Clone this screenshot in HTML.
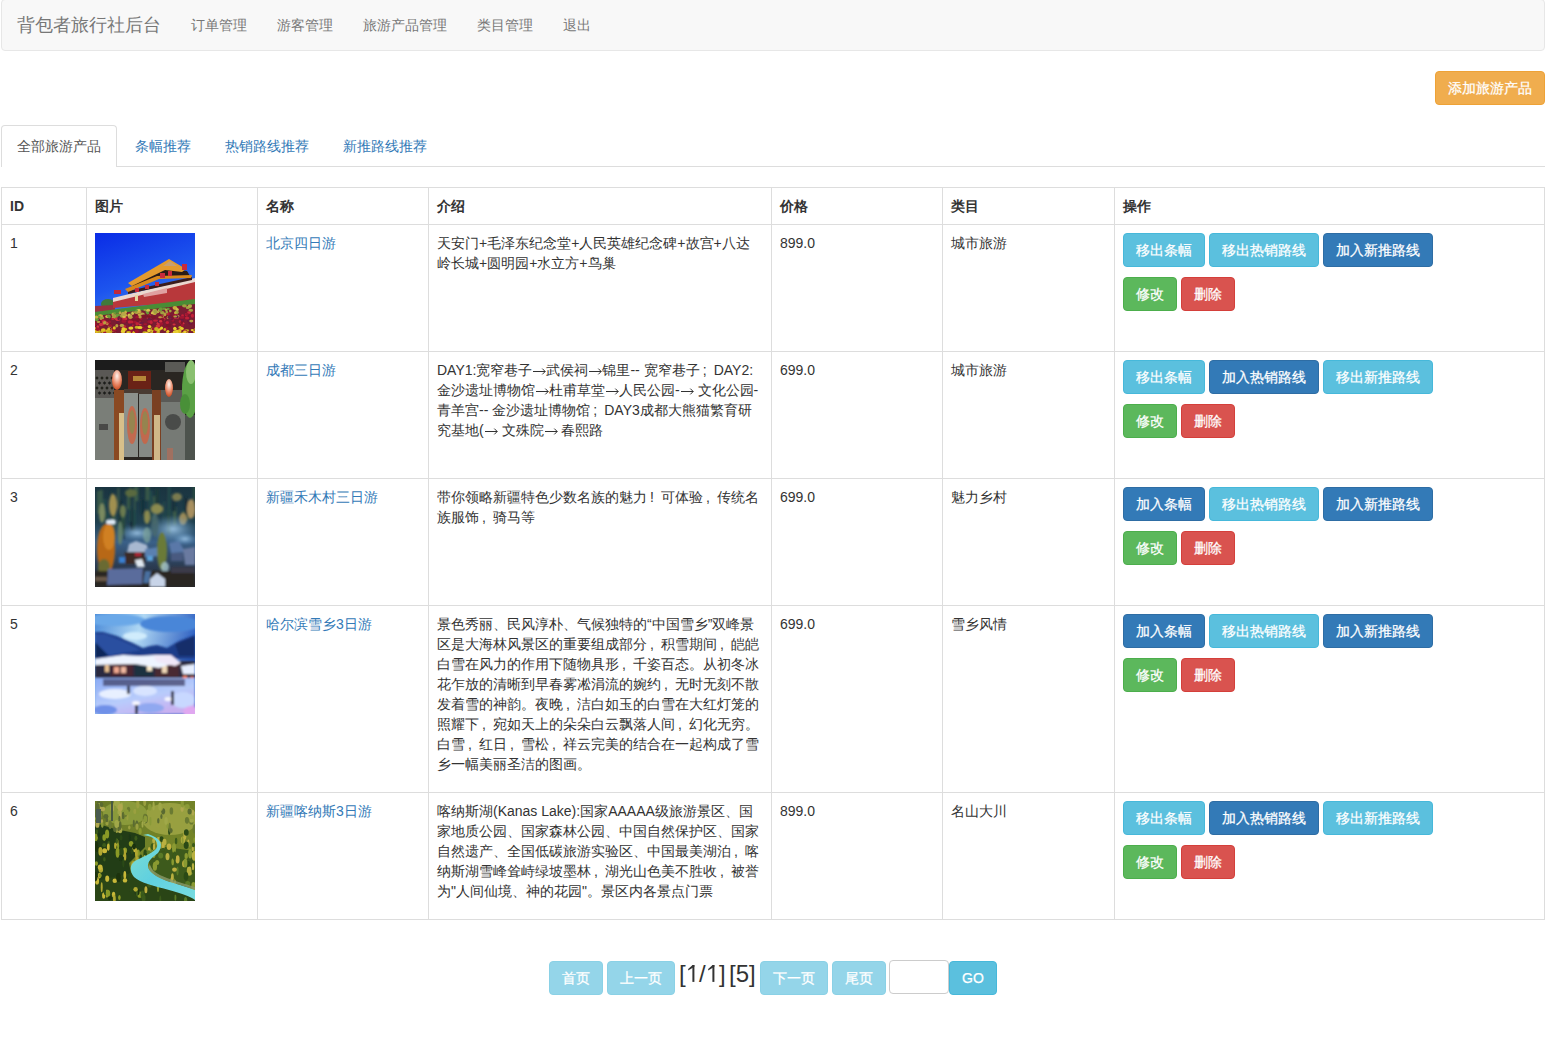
<!DOCTYPE html>
<html><head><meta charset="utf-8">
<style>
*{box-sizing:border-box;margin:0;padding:0}
html,body{width:1555px;height:1042px;overflow:hidden;background:#fff}
body{font-family:"Liberation Sans",sans-serif;font-size:14px;line-height:20px;color:#333;position:relative}
.abs{position:absolute}
.navbar{position:absolute;left:1px;top:-1px;width:1544px;height:52px;background:#f8f8f8;border:1px solid #e7e7e7;border-radius:4px;white-space:nowrap}
.brand{position:absolute;top:15px;left:15px;font-size:18px;line-height:20px;color:#777}
.nav a{position:absolute;top:15px;color:#777;text-decoration:none}
.btn{position:absolute;height:34px;border:1px solid;border-radius:4px;color:#fff;text-align:center;line-height:20px;padding:6px 0;white-space:nowrap;font-size:14px;-webkit-text-stroke:0.25px #fff}
.warn{background:#f0ad4e;border-color:#eea236}
.info{background:#5bc0de;border-color:#46b8da}
.prim{background:#337ab7;border-color:#2e6da4}
.succ{background:#5cb85c;border-color:#4cae4c}
.dang{background:#d9534f;border-color:#d43f3a}
.dis{background:#94d5e9;border-color:#8ad1e6}
.tabline{position:absolute;left:1px;top:166px;width:1544px;height:1px;background:#ddd}
.tab{position:absolute;top:125px;height:42px;border:1px solid #ddd;border-bottom:0;border-radius:4px 4px 0 0;background:#fff}
.tabt{position:absolute;top:136px;white-space:nowrap}
.link{color:#337ab7}
.hl{position:absolute;height:1px;background:#ddd}
.vl{position:absolute;width:1px;background:#ddd}
.c{position:absolute;white-space:nowrap}
.th{font-weight:bold}
.img{position:absolute;width:100px;height:100px;overflow:hidden}
.img svg{display:block}
.ar{display:inline-block;width:14px;height:20px;vertical-align:top}
.ar svg{display:block}
.sc{display:inline-block;width:14px;font-style:normal;padding-left:3px}
i{font-style:normal}
.one{display:inline-block;width:13.35px;height:34px;vertical-align:top}
.one svg{display:block}
</style></head><body>
<div class="navbar">
  <span class="brand">背包者旅行社后台</span>
  <div class="nav">
    <a style="left:189px">订单管理</a>
    <a style="left:275px">游客管理</a>
    <a style="left:361px">旅游产品管理</a>
    <a style="left:475px">类目管理</a>
    <a style="left:561px">退出</a>
  </div>
</div>

<div class="btn warn" style="left:1435px;top:71px;width:110px">添加旅游产品</div>

<div class="tabline"></div>
<div class="tab" style="left:1px;width:116px"></div>
<span class="tabt" style="left:17px;color:#555">全部旅游产品</span>
<span class="tabt link" style="left:135px">条幅推荐</span>
<span class="tabt link" style="left:225px">热销路线推荐</span>
<span class="tabt link" style="left:343px">新推路线推荐</span>

<!-- table grid -->
<div class="hl" style="left:1px;top:187px;width:1544px"></div>
<div class="hl" style="left:1px;top:224px;width:1544px"></div>
<div class="hl" style="left:1px;top:351px;width:1544px"></div>
<div class="hl" style="left:1px;top:478px;width:1544px"></div>
<div class="hl" style="left:1px;top:605px;width:1544px"></div>
<div class="hl" style="left:1px;top:792px;width:1544px"></div>
<div class="hl" style="left:1px;top:919px;width:1544px"></div>
<div class="vl" style="left:1px;top:187px;height:733px"></div>
<div class="vl" style="left:86px;top:187px;height:733px"></div>
<div class="vl" style="left:257px;top:187px;height:733px"></div>
<div class="vl" style="left:428px;top:187px;height:733px"></div>
<div class="vl" style="left:771px;top:187px;height:733px"></div>
<div class="vl" style="left:942px;top:187px;height:733px"></div>
<div class="vl" style="left:1114px;top:187px;height:733px"></div>
<div class="vl" style="left:1544px;top:187px;height:733px"></div>

<!-- header -->
<span class="c th" style="left:10px;top:196px">ID</span>
<span class="c th" style="left:95px;top:196px">图片</span>
<span class="c th" style="left:266px;top:196px">名称</span>
<span class="c th" style="left:437px;top:196px">介绍</span>
<span class="c th" style="left:780px;top:196px">价格</span>
<span class="c th" style="left:951px;top:196px">类目</span>
<span class="c th" style="left:1123px;top:196px">操作</span>

<!-- row 1 -->
<span class="c" style="left:10px;top:233px">1</span>
<div class="img" style="left:95px;top:233px"><svg width="100" height="100" viewBox="0 0 100 100"><defs><linearGradient id="g1s" x1="0" y1="0" x2="0.35" y2="1"><stop offset="0" stop-color="#0a2ce6"/><stop offset="0.55" stop-color="#1d55ee"/><stop offset="1" stop-color="#4a90e8"/></linearGradient><filter id="b1" x="-10%" y="-10%" width="120%" height="120%"><feGaussianBlur stdDeviation="0.5"/></filter></defs>
<rect width="100" height="100" fill="url(#g1s)"/>
<g filter="url(#b1)">
<ellipse cx="13" cy="71" rx="7" ry="5" fill="#3f7a3a"/>
<polygon points="0,73 20,72 20,78 0,79" fill="#9a3040"/>
<polygon points="18,66 100,46 100,68 18,75" fill="#b8383a"/>
<polygon points="18,65 100,45 100,49 18,69" fill="#ead8d0"/>
<polygon points="33,58 97,44 97,47 33,61" fill="#3a1e1c"/>
<polygon points="38,51 72,35 92,38 95,43 64,44 36,55" fill="#2a1a18"/>
<polygon points="30,56 62,43 97,42 96,45 64,46 33,59" fill="#d8881e"/>
<polygon points="33,50 74,26 91,36 87,39 70,37 37,53" fill="#e39a2e"/>
<polygon points="68,33 75,28 82,33" fill="#c8a070"/>
<rect x="87" y="31" width="5" height="6" fill="#c82a3a"/>
<rect x="65" y="40" width="5" height="5" fill="#c82a3a"/>
<rect x="73" y="38" width="4" height="5" fill="#c82a3a"/>
<rect x="50" y="52" width="4" height="4" fill="#c82a3a"/>
<rect x="60" y="49" width="4" height="4" fill="#c82a3a"/>
<rect x="40" y="55" width="4" height="4" fill="#c82a3a"/>
<rect x="19" y="57" width="7" height="4" fill="#c02a3a"/>
<polygon points="48,61 72,55 72,60 49,64" fill="#e0a0a0"/>
<rect x="40" y="62" width="3" height="6" fill="#e8d8a0"/>
<polygon points="0,79 60,71 100,66 100,74 0,84" fill="#4a8c34"/>
<polygon points="0,83 100,71 100,100 0,100" fill="#7a1a30"/>
<ellipse cx="45.0" cy="90.5" rx="1.8" ry="1.9" fill="#d03040"/>
<ellipse cx="17.7" cy="96.9" rx="2.1" ry="1.8" fill="#c8b020"/>
<ellipse cx="7.8" cy="87.2" rx="2.0" ry="1.9" fill="#a01830"/>
<ellipse cx="64.0" cy="90.5" rx="2.6" ry="1.7" fill="#d03040"/>
<ellipse cx="62.0" cy="79.2" rx="2.4" ry="1.1" fill="#b8a848"/>
<ellipse cx="1.7" cy="98.7" rx="2.3" ry="1.3" fill="#e0c020"/>
<ellipse cx="59.5" cy="80.4" rx="2.1" ry="1.5" fill="#c8b040"/>
<ellipse cx="66.9" cy="86.7" rx="1.8" ry="1.6" fill="#801828"/>
<ellipse cx="94.9" cy="74.0" rx="1.6" ry="1.2" fill="#6a9a38"/>
<ellipse cx="28.1" cy="80.5" rx="1.8" ry="1.8" fill="#b8a848"/>
<ellipse cx="38.2" cy="100.0" rx="1.5" ry="1.9" fill="#e0c020"/>
<ellipse cx="3.4" cy="88.9" rx="1.8" ry="1.1" fill="#b8a040"/>
<ellipse cx="63.5" cy="95.2" rx="1.7" ry="1.3" fill="#a01830"/>
<ellipse cx="-0.4" cy="89.8" rx="1.4" ry="1.7" fill="#a01830"/>
<ellipse cx="-0.9" cy="90.9" rx="1.4" ry="1.6" fill="#d03040"/>
<ellipse cx="44.5" cy="81.7" rx="1.8" ry="1.4" fill="#c8b040"/>
<ellipse cx="39.1" cy="100.8" rx="1.6" ry="2.0" fill="#e0c020"/>
<ellipse cx="81.6" cy="81.5" rx="1.5" ry="1.4" fill="#a01830"/>
<ellipse cx="86.9" cy="90.8" rx="1.3" ry="1.1" fill="#a01830"/>
<ellipse cx="43.9" cy="77.4" rx="1.7" ry="1.3" fill="#d8c050"/>
<ellipse cx="5.6" cy="83.1" rx="2.1" ry="1.0" fill="#d8c050"/>
<ellipse cx="36.3" cy="92.3" rx="2.5" ry="1.5" fill="#c02038"/>
<ellipse cx="57.8" cy="97.6" rx="2.1" ry="1.3" fill="#e8d030"/>
<ellipse cx="21.8" cy="92.7" rx="1.5" ry="1.7" fill="#b8a040"/>
<ellipse cx="95.8" cy="77.3" rx="2.4" ry="1.6" fill="#a0a040"/>
<ellipse cx="41.8" cy="79.8" rx="1.9" ry="1.3" fill="#b8a848"/>
<ellipse cx="74.9" cy="84.4" rx="2.4" ry="1.6" fill="#d03040"/>
<ellipse cx="28.5" cy="82.7" rx="1.4" ry="1.5" fill="#b8a848"/>
<ellipse cx="66.0" cy="90.9" rx="1.6" ry="1.9" fill="#a01830"/>
<ellipse cx="19.2" cy="80.2" rx="1.8" ry="1.2" fill="#6a9a38"/>
<ellipse cx="2.8" cy="87.1" rx="2.0" ry="1.1" fill="#6a1a40"/>
<ellipse cx="35.7" cy="98.5" rx="2.1" ry="1.7" fill="#a01830"/>
<ellipse cx="58.8" cy="79.1" rx="2.5" ry="1.5" fill="#b8a848"/>
<ellipse cx="35.2" cy="85.3" rx="1.2" ry="1.6" fill="#a01830"/>
<ellipse cx="48.2" cy="94.5" rx="1.4" ry="1.1" fill="#a01830"/>
<ellipse cx="45.1" cy="85.8" rx="2.5" ry="1.7" fill="#a01830"/>
<ellipse cx="71.2" cy="95.5" rx="1.7" ry="1.7" fill="#a01830"/>
<ellipse cx="91.7" cy="97.3" rx="2.5" ry="1.0" fill="#c8b020"/>
<ellipse cx="50.0" cy="76.9" rx="1.7" ry="1.0" fill="#a0a040"/>
<ellipse cx="5.5" cy="83.2" rx="2.6" ry="1.9" fill="#b8a848"/>
<ellipse cx="73.7" cy="84.4" rx="2.2" ry="1.5" fill="#b8a040"/>
<ellipse cx="46.1" cy="90.0" rx="2.3" ry="1.0" fill="#6a1a40"/>
<ellipse cx="60.5" cy="87.7" rx="2.5" ry="1.1" fill="#c02038"/>
<ellipse cx="79.1" cy="91.6" rx="1.6" ry="1.0" fill="#d03040"/>
<ellipse cx="29.3" cy="93.8" rx="1.9" ry="1.8" fill="#c02038"/>
<ellipse cx="33.6" cy="99.4" rx="2.4" ry="1.3" fill="#c8b020"/>
<ellipse cx="67.3" cy="79.8" rx="2.3" ry="1.8" fill="#a0a040"/>
<ellipse cx="18.8" cy="84.4" rx="2.0" ry="1.3" fill="#c8b040"/>
<ellipse cx="12.2" cy="90.8" rx="2.2" ry="2.0" fill="#a01830"/>
<ellipse cx="26.8" cy="82.8" rx="1.9" ry="1.9" fill="#a0a040"/>
<ellipse cx="84.4" cy="83.5" rx="1.9" ry="1.3" fill="#6a1a40"/>
<ellipse cx="85.3" cy="100.5" rx="1.6" ry="1.8" fill="#c8b020"/>
<ellipse cx="26.9" cy="92.4" rx="2.2" ry="1.6" fill="#b8a040"/>
<ellipse cx="30.1" cy="96.3" rx="2.1" ry="1.4" fill="#e0c020"/>
<ellipse cx="17.8" cy="96.2" rx="1.5" ry="1.1" fill="#a01830"/>
<ellipse cx="2.9" cy="93.8" rx="1.4" ry="1.5" fill="#d03040"/>
<ellipse cx="64.6" cy="84.5" rx="2.2" ry="1.2" fill="#a01830"/>
<ellipse cx="47.4" cy="81.1" rx="2.3" ry="1.5" fill="#b8a848"/>
<ellipse cx="1.8" cy="86.2" rx="2.0" ry="1.9" fill="#6a9a38"/>
<ellipse cx="50.0" cy="100.9" rx="1.8" ry="1.8" fill="#e8d030"/>
<ellipse cx="92.2" cy="74.4" rx="1.4" ry="1.5" fill="#a0a040"/>
<ellipse cx="63.1" cy="98.7" rx="2.0" ry="1.7" fill="#c8b020"/>
<ellipse cx="50.3" cy="96.6" rx="1.8" ry="1.7" fill="#a01830"/>
<ellipse cx="19.3" cy="95.1" rx="1.5" ry="1.9" fill="#e0c020"/>
<ellipse cx="100.0" cy="100.3" rx="1.6" ry="1.7" fill="#a01830"/>
<ellipse cx="-0.4" cy="91.6" rx="1.8" ry="1.6" fill="#a01830"/>
<ellipse cx="77.9" cy="86.9" rx="1.5" ry="1.9" fill="#a01830"/>
<ellipse cx="42.6" cy="78.1" rx="1.7" ry="1.8" fill="#d8c050"/>
<ellipse cx="12.6" cy="83.6" rx="2.5" ry="1.5" fill="#d8c050"/>
<ellipse cx="68.5" cy="86.1" rx="2.0" ry="1.7" fill="#d03040"/>
<ellipse cx="76.8" cy="85.6" rx="1.6" ry="1.7" fill="#6a1a40"/>
<ellipse cx="64.4" cy="88.6" rx="1.6" ry="1.7" fill="#6a1a40"/>
<ellipse cx="97.3" cy="97.1" rx="1.6" ry="1.1" fill="#e8d030"/>
<ellipse cx="54.7" cy="82.8" rx="1.5" ry="1.5" fill="#d03040"/>
<ellipse cx="50.3" cy="91.3" rx="2.0" ry="1.0" fill="#a01830"/>
<ellipse cx="93.4" cy="87.7" rx="1.4" ry="1.1" fill="#6a1a40"/>
<ellipse cx="15.3" cy="99.6" rx="1.8" ry="2.0" fill="#c8b020"/>
<ellipse cx="94.0" cy="79.6" rx="1.9" ry="1.3" fill="#d03040"/>
<ellipse cx="91.7" cy="99.1" rx="1.9" ry="1.1" fill="#c8b020"/>
<ellipse cx="41.6" cy="78.1" rx="1.4" ry="1.8" fill="#6a9a38"/>
<ellipse cx="0.4" cy="85.7" rx="1.2" ry="1.3" fill="#c8b040"/>
<ellipse cx="73.3" cy="80.6" rx="1.3" ry="1.7" fill="#a0a040"/>
<ellipse cx="10.8" cy="91.1" rx="2.2" ry="1.7" fill="#801828"/>
<ellipse cx="89.4" cy="72.8" rx="2.4" ry="1.6" fill="#a0a040"/>
<ellipse cx="54.0" cy="97.6" rx="1.9" ry="1.9" fill="#e8d030"/>
<ellipse cx="61.6" cy="97.3" rx="2.5" ry="1.6" fill="#e8d030"/>
<ellipse cx="34.1" cy="82.4" rx="1.6" ry="1.9" fill="#d8c050"/>
<ellipse cx="20.7" cy="101.0" rx="1.4" ry="1.2" fill="#e0c020"/>
<ellipse cx="73.6" cy="80.9" rx="1.8" ry="1.9" fill="#a01830"/>
<ellipse cx="54.5" cy="93.6" rx="1.8" ry="1.7" fill="#e8d030"/>
<ellipse cx="-0.2" cy="85.8" rx="2.5" ry="2.0" fill="#6a9a38"/>
<ellipse cx="10.0" cy="91.1" rx="1.9" ry="1.7" fill="#801828"/>
<ellipse cx="17.7" cy="81.5" rx="1.2" ry="1.8" fill="#b8a848"/>
<ellipse cx="61.8" cy="98.6" rx="1.4" ry="1.2" fill="#c8b020"/>
<ellipse cx="19.2" cy="97.6" rx="2.5" ry="1.1" fill="#a01830"/>
<ellipse cx="4.4" cy="100.1" rx="1.3" ry="1.1" fill="#c8b020"/>
<ellipse cx="38.7" cy="87.7" rx="1.8" ry="1.6" fill="#801828"/>
<ellipse cx="-0.6" cy="95.3" rx="1.5" ry="1.5" fill="#e8d030"/>
<ellipse cx="74.9" cy="84.8" rx="2.0" ry="1.1" fill="#c02038"/>
<ellipse cx="80.4" cy="82.2" rx="2.3" ry="1.7" fill="#a01830"/>
<ellipse cx="87.5" cy="90.4" rx="2.0" ry="1.2" fill="#d03040"/>
<ellipse cx="58.8" cy="84.2" rx="1.6" ry="1.1" fill="#801828"/>
<ellipse cx="75.3" cy="78.1" rx="1.4" ry="1.3" fill="#a0a040"/>
<ellipse cx="54.0" cy="85.3" rx="2.3" ry="1.4" fill="#d03040"/>
<ellipse cx="73.2" cy="75.9" rx="1.6" ry="1.1" fill="#6a9a38"/>
<ellipse cx="90.4" cy="100.7" rx="1.5" ry="1.9" fill="#e0c020"/>
<ellipse cx="67.3" cy="83.5" rx="1.8" ry="1.2" fill="#b8a040"/>
<ellipse cx="6.0" cy="91.5" rx="2.1" ry="1.7" fill="#d03040"/>
<ellipse cx="77.2" cy="100.5" rx="1.4" ry="1.1" fill="#e0c020"/>
<ellipse cx="22.7" cy="89.0" rx="1.3" ry="1.2" fill="#6a1a40"/>
<ellipse cx="37.1" cy="80.2" rx="1.6" ry="1.3" fill="#6a9a38"/>
<ellipse cx="54.2" cy="86.4" rx="2.0" ry="2.0" fill="#6a1a40"/>
<ellipse cx="64.4" cy="96.0" rx="2.0" ry="1.7" fill="#e0c020"/>
<ellipse cx="97.4" cy="82.8" rx="1.7" ry="2.0" fill="#c02038"/>
<ellipse cx="87.0" cy="87.9" rx="1.3" ry="1.9" fill="#6a1a40"/>
<ellipse cx="41.8" cy="89.8" rx="1.6" ry="1.5" fill="#6a1a40"/>
<ellipse cx="48.3" cy="83.2" rx="2.1" ry="1.7" fill="#801828"/>
<ellipse cx="0.8" cy="96.7" rx="2.1" ry="1.4" fill="#e0c020"/>
<ellipse cx="69.2" cy="75.8" rx="2.2" ry="1.1" fill="#6a9a38"/>
<ellipse cx="100.8" cy="99.3" rx="2.3" ry="1.2" fill="#e0c020"/>
<ellipse cx="72.8" cy="80.8" rx="1.3" ry="1.1" fill="#c02038"/>
<ellipse cx="82.3" cy="98.5" rx="2.6" ry="1.8" fill="#e8d030"/>
<ellipse cx="60.8" cy="78.3" rx="1.8" ry="1.1" fill="#d8c050"/>
<ellipse cx="87.6" cy="82.6" rx="1.4" ry="1.4" fill="#c02038"/>
<ellipse cx="67.5" cy="86.6" rx="2.1" ry="1.7" fill="#801828"/>
<ellipse cx="35.9" cy="95.1" rx="2.5" ry="1.7" fill="#e8d030"/>
<ellipse cx="22.8" cy="81.9" rx="2.3" ry="1.6" fill="#6a9a38"/>
<ellipse cx="35.4" cy="84.3" rx="2.2" ry="1.7" fill="#b8a040"/>
<ellipse cx="17.8" cy="85.9" rx="1.5" ry="1.2" fill="#c02038"/>
<ellipse cx="99.9" cy="98.5" rx="2.1" ry="1.0" fill="#e0c020"/>
<ellipse cx="25.0" cy="79.8" rx="1.3" ry="1.5" fill="#b8a848"/>
<ellipse cx="5.5" cy="83.1" rx="2.0" ry="1.6" fill="#c8b040"/>
<ellipse cx="36.8" cy="89.0" rx="1.7" ry="1.5" fill="#c02038"/>
<ellipse cx="11.9" cy="98.4" rx="1.8" ry="1.8" fill="#e0c020"/>
<ellipse cx="85.2" cy="94.4" rx="1.8" ry="1.3" fill="#c8b020"/>
<ellipse cx="82.2" cy="83.3" rx="2.4" ry="1.6" fill="#b8a040"/>
<ellipse cx="28.3" cy="95.7" rx="1.8" ry="1.4" fill="#e8d030"/>
<ellipse cx="8.1" cy="98.5" rx="2.0" ry="1.4" fill="#e0c020"/>
<ellipse cx="57.1" cy="96.3" rx="1.6" ry="1.8" fill="#c8b020"/>
<ellipse cx="5.9" cy="85.5" rx="1.3" ry="1.3" fill="#d8c050"/>
<ellipse cx="73.4" cy="92.7" rx="2.4" ry="1.2" fill="#801828"/>
<ellipse cx="66.4" cy="83.3" rx="1.7" ry="1.4" fill="#a01830"/>
<ellipse cx="59.9" cy="98.5" rx="1.8" ry="1.8" fill="#a01830"/>
<ellipse cx="29.7" cy="85.8" rx="2.6" ry="1.7" fill="#d03040"/>
<ellipse cx="51.7" cy="78.4" rx="1.2" ry="1.7" fill="#6a9a38"/>
<ellipse cx="58.8" cy="95.8" rx="2.3" ry="1.5" fill="#a01830"/>
<ellipse cx="85.0" cy="88.6" rx="1.3" ry="1.5" fill="#c02038"/>
<ellipse cx="86.9" cy="95.6" rx="1.9" ry="1.5" fill="#e8d030"/>
<ellipse cx="57.0" cy="100.2" rx="1.3" ry="1.5" fill="#c8b020"/>
<ellipse cx="80.0" cy="75.5" rx="1.6" ry="1.1" fill="#b8a848"/>
<ellipse cx="30.6" cy="79.2" rx="1.3" ry="1.8" fill="#c8b040"/>
<ellipse cx="41.9" cy="94.2" rx="2.3" ry="1.5" fill="#c8b020"/>
<ellipse cx="77.5" cy="84.3" rx="2.3" ry="1.3" fill="#801828"/>
<ellipse cx="12.2" cy="90.6" rx="1.3" ry="1.6" fill="#b8a040"/>
<ellipse cx="2.8" cy="96.3" rx="2.4" ry="1.8" fill="#a01830"/>
<ellipse cx="84.7" cy="97.8" rx="1.9" ry="1.7" fill="#e0c020"/>
<ellipse cx="81.4" cy="84.8" rx="2.5" ry="1.2" fill="#d03040"/>
<ellipse cx="14.9" cy="93.5" rx="1.4" ry="1.2" fill="#b8a040"/>
<ellipse cx="42.2" cy="84.3" rx="1.9" ry="1.7" fill="#a01830"/>
<ellipse cx="29.6" cy="82.2" rx="2.5" ry="1.8" fill="#c8b040"/>
<ellipse cx="-0.2" cy="91.2" rx="1.6" ry="1.2" fill="#a01830"/>
<ellipse cx="35.4" cy="91.6" rx="2.2" ry="1.6" fill="#6a1a40"/>
<ellipse cx="21.3" cy="83.6" rx="1.8" ry="1.9" fill="#6a9a38"/>
<ellipse cx="95.5" cy="90.0" rx="1.9" ry="1.3" fill="#6a1a40"/>
<ellipse cx="90.3" cy="98.5" rx="2.1" ry="1.8" fill="#a01830"/>
<ellipse cx="7.6" cy="98.3" rx="1.3" ry="1.9" fill="#c8b020"/>
<ellipse cx="81.3" cy="83.8" rx="2.3" ry="1.8" fill="#6a1a40"/>
<ellipse cx="79.9" cy="74.8" rx="2.4" ry="1.9" fill="#c8b040"/>
<ellipse cx="92.1" cy="85.0" rx="2.2" ry="1.6" fill="#c02038"/>
<ellipse cx="14.4" cy="83.6" rx="1.4" ry="1.9" fill="#6a9a38"/>
<ellipse cx="82.2" cy="76.6" rx="1.6" ry="1.5" fill="#d8c050"/>
<ellipse cx="13.7" cy="96.3" rx="1.5" ry="1.9" fill="#e0c020"/>
<ellipse cx="13.5" cy="83.1" rx="1.6" ry="1.7" fill="#6a9a38"/>
<ellipse cx="8.1" cy="90.7" rx="1.3" ry="1.7" fill="#d03040"/>
<ellipse cx="54.5" cy="88.7" rx="2.3" ry="1.4" fill="#a01830"/>
<ellipse cx="93.3" cy="74.4" rx="1.5" ry="1.5" fill="#a0a040"/>
<ellipse cx="52.7" cy="80.1" rx="1.6" ry="1.4" fill="#6a9a38"/>
<ellipse cx="55.9" cy="100.9" rx="1.7" ry="1.7" fill="#e0c020"/>
<ellipse cx="9.0" cy="88.9" rx="2.2" ry="1.8" fill="#d03040"/>
<ellipse cx="10.7" cy="89.8" rx="2.2" ry="1.5" fill="#d03040"/>
<ellipse cx="28.5" cy="81.4" rx="2.4" ry="1.8" fill="#b8a848"/>
<ellipse cx="72.8" cy="98.3" rx="1.6" ry="1.4" fill="#e8d030"/>
<ellipse cx="54.1" cy="83.5" rx="2.3" ry="1.6" fill="#801828"/>
<ellipse cx="7.0" cy="85.0" rx="2.2" ry="1.3" fill="#a0a040"/>
<ellipse cx="96.3" cy="88.1" rx="2.1" ry="1.4" fill="#b8a040"/>
<ellipse cx="37.8" cy="80.2" rx="1.3" ry="1.7" fill="#d8c050"/>
<ellipse cx="71.7" cy="79.0" rx="1.3" ry="1.5" fill="#a0a040"/>
<ellipse cx="71.2" cy="76.9" rx="1.4" ry="1.1" fill="#b8a848"/>
<ellipse cx="40.3" cy="79.3" rx="2.5" ry="1.1" fill="#a0a040"/>
<ellipse cx="19.4" cy="83.0" rx="1.9" ry="1.9" fill="#a0a040"/>
<ellipse cx="62.8" cy="93.9" rx="2.6" ry="1.8" fill="#a01830"/>
<ellipse cx="66.7" cy="90.7" rx="1.6" ry="1.2" fill="#a01830"/>
<ellipse cx="29.9" cy="88.5" rx="1.7" ry="1.5" fill="#6a1a40"/>
<ellipse cx="80.0" cy="96.1" rx="1.6" ry="1.5" fill="#e8d030"/>
<ellipse cx="29.0" cy="84.0" rx="1.9" ry="1.1" fill="#d8c050"/>
<ellipse cx="72.2" cy="100.6" rx="2.0" ry="1.0" fill="#e8d030"/>
<ellipse cx="66.6" cy="95.1" rx="1.5" ry="1.6" fill="#e8d030"/>
<ellipse cx="70.5" cy="83.1" rx="1.6" ry="1.9" fill="#801828"/>
<ellipse cx="45.0" cy="94.5" rx="2.5" ry="1.5" fill="#e8d030"/>
<ellipse cx="56.3" cy="89.9" rx="1.4" ry="1.7" fill="#801828"/>
<ellipse cx="91.3" cy="81.7" rx="1.4" ry="1.8" fill="#c02038"/>
<ellipse cx="28.0" cy="98.7" rx="2.3" ry="1.4" fill="#e8d030"/>
<ellipse cx="15.3" cy="92.7" rx="1.8" ry="1.4" fill="#a01830"/>
<ellipse cx="79.4" cy="99.1" rx="1.6" ry="1.7" fill="#e8d030"/>
<ellipse cx="74.7" cy="84.2" rx="2.1" ry="1.8" fill="#6a1a40"/>
<ellipse cx="14.5" cy="88.9" rx="1.4" ry="1.4" fill="#a01830"/>
<ellipse cx="57.2" cy="80.1" rx="1.4" ry="1.2" fill="#d8c050"/>
<ellipse cx="94.9" cy="73.1" rx="2.2" ry="1.8" fill="#b8a848"/>
<ellipse cx="39.9" cy="89.2" rx="1.9" ry="1.4" fill="#a01830"/>
<ellipse cx="62.9" cy="92.9" rx="2.3" ry="1.5" fill="#d03040"/>
<ellipse cx="101.4" cy="96.1" rx="2.4" ry="1.1" fill="#c8b020"/>
<ellipse cx="9.9" cy="99.8" rx="1.9" ry="1.4" fill="#a01830"/>
<ellipse cx="92.0" cy="81.2" rx="1.6" ry="1.6" fill="#a01830"/>
<ellipse cx="43.1" cy="86.2" rx="2.3" ry="1.3" fill="#801828"/>
<ellipse cx="59.7" cy="77.2" rx="2.4" ry="1.2" fill="#b8a848"/>
<ellipse cx="88.8" cy="100.2" rx="2.2" ry="1.5" fill="#c8b020"/>
<ellipse cx="22.9" cy="86.1" rx="2.5" ry="1.9" fill="#d03040"/>
<ellipse cx="101.9" cy="92.9" rx="2.4" ry="1.4" fill="#a01830"/>
<ellipse cx="81.7" cy="79.2" rx="2.0" ry="1.9" fill="#a0a040"/>
<ellipse cx="8.3" cy="96.9" rx="2.4" ry="1.6" fill="#e0c020"/>
<ellipse cx="45.1" cy="84.1" rx="1.6" ry="1.3" fill="#b8a040"/>
<ellipse cx="4.5" cy="99.0" rx="1.4" ry="1.7" fill="#c8b020"/>
<ellipse cx="22.0" cy="86.1" rx="2.5" ry="1.3" fill="#d03040"/>
<ellipse cx="49.8" cy="99.4" rx="2.4" ry="1.2" fill="#c8b020"/>
<ellipse cx="87.3" cy="92.2" rx="1.5" ry="1.8" fill="#a01830"/>
<ellipse cx="34.8" cy="89.0" rx="2.1" ry="1.7" fill="#c02038"/>
<ellipse cx="56.2" cy="89.2" rx="1.5" ry="1.9" fill="#c02038"/>
<ellipse cx="3.2" cy="83.7" rx="2.5" ry="1.3" fill="#6a9a38"/>
<ellipse cx="41.7" cy="98.1" rx="2.2" ry="1.9" fill="#a01830"/>
<ellipse cx="44.3" cy="79.0" rx="2.4" ry="1.1" fill="#c8b040"/>
<ellipse cx="69.9" cy="81.5" rx="1.5" ry="1.7" fill="#b8a040"/>
<ellipse cx="80.2" cy="83.5" rx="1.9" ry="1.1" fill="#b8a040"/>
<ellipse cx="51.7" cy="100.4" rx="2.1" ry="1.3" fill="#e8d030"/>
<ellipse cx="64.6" cy="77.2" rx="1.8" ry="1.5" fill="#b8a848"/>
<ellipse cx="53.2" cy="77.3" rx="2.0" ry="1.5" fill="#d8c050"/>
<ellipse cx="42.0" cy="90.8" rx="1.6" ry="1.8" fill="#c02038"/>
<ellipse cx="23.6" cy="85.4" rx="1.2" ry="1.8" fill="#6a1a40"/>
<ellipse cx="13.7" cy="98.9" rx="2.5" ry="1.6" fill="#c8b020"/>
<ellipse cx="-1.7" cy="99.0" rx="1.5" ry="1.6" fill="#e0c020"/>
<ellipse cx="65.1" cy="84.2" rx="1.9" ry="1.0" fill="#b8a040"/>
<ellipse cx="28.3" cy="97.2" rx="2.0" ry="1.8" fill="#e8d030"/>
<ellipse cx="9.7" cy="89.7" rx="1.8" ry="1.8" fill="#b8a040"/>
<ellipse cx="79.8" cy="95.2" rx="1.6" ry="1.5" fill="#e8d030"/>
<ellipse cx="86.7" cy="89.7" rx="1.2" ry="1.6" fill="#801828"/>
<ellipse cx="72.3" cy="89.5" rx="1.7" ry="1.6" fill="#c02038"/>
<ellipse cx="61.3" cy="96.0" rx="2.2" ry="1.9" fill="#c8b020"/>
<ellipse cx="1.2" cy="84.1" rx="2.0" ry="1.5" fill="#c8b040"/>
<ellipse cx="80.3" cy="79.8" rx="1.3" ry="1.4" fill="#c8b040"/>
<ellipse cx="70.3" cy="96.2" rx="2.3" ry="1.5" fill="#a01830"/>
<ellipse cx="65.6" cy="88.2" rx="1.6" ry="1.2" fill="#d03040"/>
<ellipse cx="69.8" cy="96.5" rx="1.3" ry="1.4" fill="#c8b020"/>
<ellipse cx="35.9" cy="83.0" rx="1.4" ry="1.8" fill="#b8a848"/>
<ellipse cx="60.5" cy="78.8" rx="1.9" ry="2.0" fill="#a0a040"/>
<ellipse cx="-1.7" cy="89.9" rx="1.4" ry="1.4" fill="#6a1a40"/>
<ellipse cx="29.0" cy="88.2" rx="2.6" ry="1.7" fill="#a01830"/>
<ellipse cx="72.6" cy="100.4" rx="1.6" ry="1.1" fill="#e8d030"/>
<ellipse cx="87.0" cy="84.4" rx="2.5" ry="1.4" fill="#a01830"/>
<ellipse cx="33.1" cy="100.6" rx="1.3" ry="1.4" fill="#e8d030"/>
<ellipse cx="65.6" cy="76.3" rx="2.0" ry="1.9" fill="#6a9a38"/>
<ellipse cx="90.0" cy="98.8" rx="1.8" ry="1.4" fill="#e8d030"/>
</g></svg></div>
<span class="c link" style="left:266px;top:233px">北京四日游</span>
<div class="c" style="left:437px;top:233px">天安门+毛泽东纪念堂+人民英雄纪念碑+故宫+八达<br>岭长城+圆明园+水立方+鸟巢</div>
<span class="c" style="left:780px;top:233px">899.0</span>
<span class="c" style="left:951px;top:233px">城市旅游</span>
<div class="btn info" style="left:1123px;top:233px;width:82px">移出条幅</div>
<div class="btn info" style="left:1209px;top:233px;width:110px">移出热销路线</div>
<div class="btn prim" style="left:1323px;top:233px;width:110px">加入新推路线</div>
<div class="btn succ" style="left:1123px;top:277px;width:54px">修改</div>
<div class="btn dang" style="left:1181px;top:277px;width:54px">删除</div>
<!-- row 2 -->
<span class="c" style="left:10px;top:360px">2</span>
<div class="img" style="left:95px;top:360px"><svg width="100" height="100" viewBox="0 0 100 100"><defs><filter id="b2"><feGaussianBlur stdDeviation="0.7"/></filter><radialGradient id="l2" cx="0.5" cy="0.3" r="0.7"><stop offset="0" stop-color="#fff4ee"/><stop offset="0.6" stop-color="#e88a6a"/><stop offset="1" stop-color="#c84a20"/></radialGradient></defs>
<rect width="100" height="100" fill="#2a2622"/>
<g filter="url(#b2)">
<rect x="0" y="0" width="100" height="10" fill="#1e1c1a"/><rect x="70" y="2" width="20" height="10" fill="#5a5a56"/>
<rect x="0" y="10" width="19" height="28" fill="#5a5954"/>
<g><rect x="0.8" y="16.8" width="2.4" height="2.4" transform="rotate(45 2.0 18.0)" fill="#1e1e1c"/><rect x="5.8" y="16.8" width="2.4" height="2.4" transform="rotate(45 7.0 18.0)" fill="#1e1e1c"/><rect x="10.8" y="16.8" width="2.4" height="2.4" transform="rotate(45 12.0 18.0)" fill="#1e1e1c"/><rect x="15.8" y="16.8" width="2.4" height="2.4" transform="rotate(45 17.0 18.0)" fill="#1e1e1c"/><rect x="3.3" y="21.8" width="2.4" height="2.4" transform="rotate(45 4.5 23.0)" fill="#1e1e1c"/><rect x="8.3" y="21.8" width="2.4" height="2.4" transform="rotate(45 9.5 23.0)" fill="#1e1e1c"/><rect x="13.3" y="21.8" width="2.4" height="2.4" transform="rotate(45 14.5 23.0)" fill="#1e1e1c"/><rect x="18.3" y="21.8" width="2.4" height="2.4" transform="rotate(45 19.5 23.0)" fill="#1e1e1c"/><rect x="0.8" y="26.8" width="2.4" height="2.4" transform="rotate(45 2.0 28.0)" fill="#1e1e1c"/><rect x="5.8" y="26.8" width="2.4" height="2.4" transform="rotate(45 7.0 28.0)" fill="#1e1e1c"/><rect x="10.8" y="26.8" width="2.4" height="2.4" transform="rotate(45 12.0 28.0)" fill="#1e1e1c"/><rect x="15.8" y="26.8" width="2.4" height="2.4" transform="rotate(45 17.0 28.0)" fill="#1e1e1c"/><rect x="3.3" y="31.8" width="2.4" height="2.4" transform="rotate(45 4.5 33.0)" fill="#1e1e1c"/><rect x="8.3" y="31.8" width="2.4" height="2.4" transform="rotate(45 9.5 33.0)" fill="#1e1e1c"/><rect x="13.3" y="31.8" width="2.4" height="2.4" transform="rotate(45 14.5 33.0)" fill="#1e1e1c"/><rect x="18.3" y="31.8" width="2.4" height="2.4" transform="rotate(45 19.5 33.0)" fill="#1e1e1c"/><rect x="67.0" y="31.0" width="2" height="2" transform="rotate(45 68.0 32.0)" fill="#1e1e1c"/><rect x="72.0" y="31.0" width="2" height="2" transform="rotate(45 73.0 32.0)" fill="#1e1e1c"/><rect x="77.0" y="31.0" width="2" height="2" transform="rotate(45 78.0 32.0)" fill="#1e1e1c"/><rect x="82.0" y="31.0" width="2" height="2" transform="rotate(45 83.0 32.0)" fill="#1e1e1c"/><rect x="87.0" y="31.0" width="2" height="2" transform="rotate(45 88.0 32.0)" fill="#1e1e1c"/><rect x="69.5" y="35.0" width="2" height="2" transform="rotate(45 70.5 36.0)" fill="#1e1e1c"/><rect x="74.5" y="35.0" width="2" height="2" transform="rotate(45 75.5 36.0)" fill="#1e1e1c"/><rect x="79.5" y="35.0" width="2" height="2" transform="rotate(45 80.5 36.0)" fill="#1e1e1c"/><rect x="84.5" y="35.0" width="2" height="2" transform="rotate(45 85.5 36.0)" fill="#1e1e1c"/><rect x="89.5" y="35.0" width="2" height="2" transform="rotate(45 90.5 36.0)" fill="#1e1e1c"/><rect x="67.0" y="39.0" width="2" height="2" transform="rotate(45 68.0 40.0)" fill="#1e1e1c"/><rect x="72.0" y="39.0" width="2" height="2" transform="rotate(45 73.0 40.0)" fill="#1e1e1c"/><rect x="77.0" y="39.0" width="2" height="2" transform="rotate(45 78.0 40.0)" fill="#1e1e1c"/><rect x="82.0" y="39.0" width="2" height="2" transform="rotate(45 83.0 40.0)" fill="#1e1e1c"/><rect x="87.0" y="39.0" width="2" height="2" transform="rotate(45 88.0 40.0)" fill="#1e1e1c"/></g>
<rect x="0" y="38" width="19" height="62" fill="#7a7e78"/>
<rect x="4" y="64" width="9" height="6" fill="#4a4a46"/>
<rect x="19" y="30" width="10" height="70" fill="#8a4a24"/>
<rect x="57" y="30" width="9" height="70" fill="#7a4020"/>
<rect x="33" y="11" width="23" height="18" fill="#6a2414"/>
<rect x="38" y="16" width="13" height="5" fill="#c8a040" opacity="0.8"/>
<rect x="29" y="29" width="28" height="5" fill="#4a3a30"/>
<rect x="29" y="33" width="14" height="64" fill="#8c918c"/>
<rect x="44" y="34" width="13" height="63" fill="#858a85"/>
<ellipse cx="37" cy="65" rx="5" ry="19" fill="#d06040" opacity="0.8"/>
<ellipse cx="50" cy="66" rx="5" ry="18" fill="#d06040" opacity="0.8"/>
<ellipse cx="37" cy="62" rx="3" ry="12" fill="#6aa050" opacity="0.5"/>
<ellipse cx="50" cy="63" rx="3" ry="12" fill="#6aa050" opacity="0.5"/>
<rect x="24" y="53" width="5" height="47" fill="#d8c08a"/>
<rect x="59" y="55" width="6" height="45" fill="#d0b888"/>
<rect x="66" y="42" width="24" height="58" fill="#767a74"/>
<rect x="66" y="30" width="22" height="12" fill="#5a5a56"/>
<circle cx="78" cy="62" r="8" fill="#4a4c4a"/>
<rect x="72" y="88" width="6" height="12" fill="#a07060"/>
<rect x="90" y="55" width="10" height="45" fill="#4e524e"/>
<ellipse cx="22" cy="20" rx="5" ry="10" fill="url(#l2)"/>
<ellipse cx="74" cy="28" rx="4" ry="9" fill="url(#l2)"/>
<ellipse cx="95" cy="30" rx="8" ry="28" fill="#5aa044"/><ellipse cx="90" cy="44" rx="5" ry="10" fill="#4a9038"/>
<ellipse cx="96" cy="12" rx="5" ry="12" fill="#8ac070"/>
</g></svg></div>
<span class="c link" style="left:266px;top:360px">成都三日游</span>
<div class="c" style="left:437px;top:360px">DAY1:宽窄巷子<i class="ar"><svg width="14" height="20"><path d="M1 11.5H13.2M10.3 8.6L13.2 11.5L10.3 14.4" stroke="#333" stroke-width="1" fill="none"/></svg></i>武侯祠<i class="ar"><svg width="14" height="20"><path d="M1 11.5H13.2M10.3 8.6L13.2 11.5L10.3 14.4" stroke="#333" stroke-width="1" fill="none"/></svg></i>锦里-- 宽窄巷子<i class="sc">;</i>DAY2:<br>金沙遗址博物馆<i class="ar"><svg width="14" height="20"><path d="M1 11.5H13.2M10.3 8.6L13.2 11.5L10.3 14.4" stroke="#333" stroke-width="1" fill="none"/></svg></i>杜甫草堂<i class="ar"><svg width="14" height="20"><path d="M1 11.5H13.2M10.3 8.6L13.2 11.5L10.3 14.4" stroke="#333" stroke-width="1" fill="none"/></svg></i>人民公园-<i class="ar"><svg width="14" height="20"><path d="M1 11.5H13.2M10.3 8.6L13.2 11.5L10.3 14.4" stroke="#333" stroke-width="1" fill="none"/></svg></i> 文化公园-<br>青羊宫-- 金沙遗址博物馆<i class="sc">;</i>DAY3成都大熊猫繁育研<br>究基地(<i class="ar"><svg width="14" height="20"><path d="M1 11.5H13.2M10.3 8.6L13.2 11.5L10.3 14.4" stroke="#333" stroke-width="1" fill="none"/></svg></i> 文殊院<i class="ar"><svg width="14" height="20"><path d="M1 11.5H13.2M10.3 8.6L13.2 11.5L10.3 14.4" stroke="#333" stroke-width="1" fill="none"/></svg></i> 春熙路</div>
<span class="c" style="left:780px;top:360px">699.0</span>
<span class="c" style="left:951px;top:360px">城市旅游</span>
<div class="btn info" style="left:1123px;top:360px;width:82px">移出条幅</div>
<div class="btn prim" style="left:1209px;top:360px;width:110px">加入热销路线</div>
<div class="btn info" style="left:1323px;top:360px;width:110px">移出新推路线</div>
<div class="btn succ" style="left:1123px;top:404px;width:54px">修改</div>
<div class="btn dang" style="left:1181px;top:404px;width:54px">删除</div>
<!-- row 3 -->
<span class="c" style="left:10px;top:487px">3</span>
<div class="img" style="left:95px;top:487px"><svg width="100" height="100" viewBox="0 0 100 100"><defs><filter id="b3" x="-10%" y="-10%" width="120%" height="120%"><feGaussianBlur stdDeviation="0.8"/></filter><linearGradient id="g3" x1="0" y1="0" x2="0" y2="1"><stop offset="0" stop-color="#1a3440"/><stop offset="0.35" stop-color="#20404e"/><stop offset="0.55" stop-color="#3a6088"/><stop offset="0.8" stop-color="#2a3a50"/><stop offset="1" stop-color="#26282c"/></linearGradient><radialGradient id="m3" cx="0.5" cy="0.5" r="0.5"><stop offset="0" stop-color="#a8d0f0" stop-opacity="0.85"/><stop offset="1" stop-color="#6aa0d0" stop-opacity="0"/></radialGradient></defs>
<rect width="100" height="100" fill="url(#g3)"/>
<g filter="url(#b3)">
<rect x="23.8" y="13.1" width="2.9" height="17.4" fill="#162a34"/>
<rect x="58.1" y="9.1" width="3.0" height="28.2" fill="#3a5a48"/>
<rect x="23.4" y="20.1" width="4.0" height="19.4" fill="#2a4a40"/>
<rect x="39.7" y="-0.5" width="3.7" height="14.6" fill="#3a5a48"/>
<rect x="39.0" y="-0.2" width="1.5" height="25.5" fill="#3a5a48"/>
<rect x="4.3" y="3.1" width="3.5" height="26.5" fill="#3a5a48"/>
<rect x="71.9" y="22.6" width="3.7" height="24.3" fill="#2a4a40"/>
<rect x="72.8" y="-1.0" width="2.9" height="29.3" fill="#24484a"/>
<rect x="9.7" y="24.0" width="1.8" height="14.3" fill="#2a4a40"/>
<rect x="77.9" y="20.0" width="3.6" height="18.4" fill="#3a5a48"/>
<rect x="35.1" y="22.1" width="3.0" height="21.7" fill="#162a34"/>
<rect x="91.6" y="13.2" width="1.6" height="15.6" fill="#162a34"/>
<rect x="16.3" y="22.1" width="3.7" height="29.3" fill="#3a5a48"/>
<rect x="10.4" y="24.6" width="3.1" height="22.7" fill="#24484a"/>
<rect x="28.5" y="24.7" width="1.7" height="27.1" fill="#16303a"/>
<rect x="34.4" y="-4.4" width="1.7" height="27.9" fill="#2a4a40"/>
<rect x="76.9" y="13.4" width="3.7" height="10.9" fill="#16303a"/>
<rect x="37.8" y="22.7" width="3.0" height="21.0" fill="#24484a"/>
<rect x="50.5" y="-2.7" width="4.0" height="16.2" fill="#3a5a48"/>
<rect x="53.6" y="3.7" width="3.9" height="29.4" fill="#24484a"/>
<rect x="15.6" y="4.4" width="1.6" height="27.4" fill="#1a3a3a"/>
<rect x="89.7" y="10.6" width="2.4" height="19.2" fill="#162a34"/>
<rect x="86.7" y="24.2" width="3.2" height="12.1" fill="#3a5a48"/>
<rect x="27.1" y="23.1" width="3.1" height="24.3" fill="#2a4a40"/>
<rect x="97.8" y="-4.7" width="2.8" height="21.0" fill="#2a4a40"/>
<rect x="98.7" y="12.7" width="2.3" height="17.5" fill="#1a3a3a"/>
<rect x="6.0" y="15.4" width="3.1" height="19.3" fill="#24484a"/>
<rect x="60.9" y="12.7" width="2.2" height="19.8" fill="#162a34"/>
<rect x="2.1" y="4.0" width="2.4" height="22.6" fill="#3a5a48"/>
<rect x="32.0" y="6.1" width="2.4" height="16.3" fill="#3a5a48"/>
<rect x="26.4" y="19.4" width="3.5" height="12.1" fill="#3a5a48"/>
<rect x="68.4" y="14.6" width="1.8" height="20.0" fill="#24484a"/>
<rect x="23.9" y="15.9" width="2.0" height="18.7" fill="#16303a"/>
<rect x="60.1" y="1.7" width="3.9" height="23.5" fill="#1a3a3a"/>
<rect x="8.0" y="12.1" width="3.4" height="14.4" fill="#24484a"/>
<rect x="22.5" y="0.7" width="1.8" height="20.6" fill="#3a5a48"/>
<rect x="18.4" y="14.3" width="2.2" height="26.1" fill="#3a5a48"/>
<rect x="34.5" y="18.8" width="1.8" height="15.8" fill="#24484a"/>
<rect x="46.5" y="12.0" width="3.1" height="15.8" fill="#16303a"/>
<rect x="92.1" y="23.3" width="1.9" height="10.1" fill="#3a5a48"/>
<ellipse cx="18" cy="18" rx="4" ry="11" fill="#a09050"/>
<ellipse cx="7" cy="26" rx="3" ry="10" fill="#7a8a60"/>
<ellipse cx="62" cy="22" rx="6" ry="5" fill="#8a8a50"/>
<ellipse cx="96" cy="22" rx="4" ry="10" fill="#a89060"/>
<ellipse cx="36" cy="6" rx="6" ry="4" fill="#5a6a40"/>
<ellipse cx="82" cy="10" rx="5" ry="4" fill="#7a7a50"/>
<ellipse cx="52" cy="30" rx="3" ry="7" fill="#8a8a50"/>
<ellipse cx="28" cy="24" rx="3" ry="6" fill="#6a7a50"/>
<ellipse cx="88" cy="32" rx="4" ry="6" fill="#9a8a58"/>
<ellipse cx="78" cy="42" rx="24" ry="14" fill="url(#m3)"/>
<ellipse cx="42" cy="46" rx="18" ry="8" fill="url(#m3)"/>
<ellipse cx="90" cy="52" rx="12" ry="6" fill="url(#m3)"/>
<ellipse cx="16" cy="35" rx="5" ry="2.5" fill="#e0ecf8"/>
<ellipse cx="60" cy="38" rx="4" ry="12" fill="#4a6a70" opacity="0.8"/>
<ellipse cx="25" cy="46" rx="2.5" ry="12" fill="#6a8a6a" opacity="0.8"/>
<ellipse cx="52" cy="48" rx="4" ry="8" fill="#8ab0a0" opacity="0.6"/>
<polygon points="34,57 41,54 52,58 53,65 32,66" fill="#a8b8d0"/>
<rect x="30" y="65" width="20" height="12" fill="#3a2a28"/>
<rect x="40" y="66" width="6" height="3" fill="#b02838"/>
<polygon points="50,62 64,60 66,69 50,70" fill="#5a80b0"/>
<rect x="52" y="69" width="6" height="5" fill="#5aa0d8"/>
<polygon points="74,56 84,54 90,65 76,66" fill="#5a78a8"/>
<polygon points="88,62 100,60 100,78 90,78" fill="#6a7aa0"/>
<rect x="76" y="66" width="12" height="8" fill="#4a5a80"/>
<polygon points="40,73 47,72 50,80 42,80" fill="#e0e8f0"/>
<rect x="24" y="70" width="6" height="6" fill="#3a80d0"/>
<ellipse cx="11" cy="62" rx="9" ry="25" fill="#b86818"/>
<ellipse cx="14" cy="50" rx="6" ry="13" fill="#d08020"/>
<ellipse cx="9" cy="80" rx="6" ry="8" fill="#6a6a30"/>
<ellipse cx="67" cy="64" rx="5" ry="19" fill="#6a7a38"/>
<ellipse cx="70" cy="80" rx="4" ry="5" fill="#a8c8d0" opacity="0.8"/>
<rect x="0" y="84" width="100" height="16" fill="#2a2624"/>
<polygon points="13,82 48,81 47,97 12,98" fill="#5a6c9c"/>
<polygon points="55,92 62,86 70,92 70,100 55,100" fill="#c8d4e8"/>
<polygon points="50,84 56,84 54,96 48,96" fill="#4a70a0"/>
<rect x="76" y="80" width="24" height="6" fill="#3a3a48"/>
<rect x="0" y="90" width="12" height="4" fill="#6a5a48"/>
</g></svg></div>
<span class="c link" style="left:266px;top:487px">新疆禾木村三日游</span>
<div class="c" style="left:437px;top:487px">带你领略新疆特色少数名族的魅力<i class="sc">!</i>可体验<i class="sc">,</i>传统名<br>族服饰<i class="sc">,</i>骑马等</div>
<span class="c" style="left:780px;top:487px">699.0</span>
<span class="c" style="left:951px;top:487px">魅力乡村</span>
<div class="btn prim" style="left:1123px;top:487px;width:82px">加入条幅</div>
<div class="btn info" style="left:1209px;top:487px;width:110px">移出热销路线</div>
<div class="btn prim" style="left:1323px;top:487px;width:110px">加入新推路线</div>
<div class="btn succ" style="left:1123px;top:531px;width:54px">修改</div>
<div class="btn dang" style="left:1181px;top:531px;width:54px">删除</div>
<!-- row 5 -->
<span class="c" style="left:10px;top:614px">5</span>
<div class="img" style="left:95px;top:614px"><svg width="100" height="100" viewBox="0 0 100 100"><defs><filter id="b5" x="-10%" y="-10%" width="120%" height="120%"><feGaussianBlur stdDeviation="0.8"/></filter><linearGradient id="g5" x1="0" y1="0" x2="1" y2="0.3"><stop offset="0" stop-color="#4a8ad8"/><stop offset="0.45" stop-color="#b0d8f4"/><stop offset="1" stop-color="#2a5cc0"/></linearGradient><linearGradient id="s5" x1="0" y1="0" x2="0.6" y2="1"><stop offset="0" stop-color="#8aaaf4"/><stop offset="0.6" stop-color="#b8ccfc"/><stop offset="1" stop-color="#c8b0f0"/></linearGradient></defs>
<rect width="100" height="100" fill="url(#g5)"/>
<g filter="url(#b5)">
<ellipse cx="20" cy="6" rx="30" ry="6" fill="#6aa8e8"/>
<ellipse cx="75" cy="10" rx="30" ry="8" fill="#4a86d8"/>
<ellipse cx="40" cy="22" rx="12" ry="4" fill="#d0ecfc"/>
<polygon points="0,18 8,18 22,22 40,30 48,34 55,32 62,31 72,34 84,27 100,21 100,45 0,45" fill="#1e3c8a"/>
<polygon points="0,20 10,20 30,28 46,36 0,44" fill="#2a4fa0"/>
<polygon points="0,28 14,42 0,44" fill="#10285a"/>
<polygon points="80,30 100,22 100,42 84,42" fill="#162e6a"/>
<rect x="0" y="47" width="100" height="18" fill="#2a2a40"/>
<rect x="16" y="50" width="22" height="12" fill="#4a2830"/>
<rect x="60" y="50" width="24" height="13" fill="#4a2a30"/>
<rect x="40" y="50" width="18" height="12" fill="#1e3040"/>
<rect x="10" y="51" width="4" height="7" fill="#e8c090"/>
<rect x="19" y="53" width="5" height="6" fill="#f0a890"/>
<rect x="26" y="53" width="5" height="6" fill="#f0b8a0"/>
<rect x="52" y="50" width="5" height="7" fill="#f8e8c8"/>
<rect x="67" y="52" width="5" height="7" fill="#f0d8b8"/>
<circle cx="90" cy="64" r="2.5" fill="#ff8040"/>
<circle cx="97" cy="65" r="2.5" fill="#ff7030"/>
<circle cx="39" cy="66" r="2" fill="#ff6040"/>
<polygon points="0,45 14,43 28,41 44,42 60,41 74,41 84,48 64,54 40,50 0,51" fill="#eef4ff"/>
<polygon points="58,42 76,41 86,49 80,52 62,48" fill="#f0e8f8"/>
<polygon points="86,52 100,50 100,60 88,60" fill="#e8f0ff"/>
<rect x="0" y="64" width="100" height="36" fill="url(#s5)"/>
<rect x="8" y="65" width="82" height="7" fill="#3a3a60" opacity="0.7"/>
<ellipse cx="20" cy="80" rx="16" ry="5" fill="#e8f0ff"/>
<ellipse cx="50" cy="77" rx="12" ry="5" fill="#d8e4ff"/>
<ellipse cx="88" cy="86" rx="12" ry="8" fill="#c8d8ff"/>
<ellipse cx="10" cy="96" rx="12" ry="5" fill="#7090e8"/>
<ellipse cx="55" cy="94" rx="14" ry="5" fill="#90a8f0"/>
<ellipse cx="96" cy="98" rx="8" ry="6" fill="#e0a8f0"/>
<rect x="32" y="72" width="3" height="8" fill="#2a2a3a"/>
<rect x="76" y="77" width="3" height="14" fill="#2a2a3a"/>
<rect x="40" y="90" width="3" height="10" fill="#2a2a3a"/>
<ellipse cx="41" cy="89" rx="4" ry="2" fill="#f8f8ff"/>
<ellipse cx="73" cy="85" rx="3.5" ry="2" fill="#f8f8ff"/>
</g></svg></div>
<span class="c link" style="left:266px;top:614px">哈尔滨雪乡3日游</span>
<div class="c" style="left:437px;top:614px">景色秀丽、民风淳朴、气候独特的“中国雪乡”双峰景<br>区是大海林风景区的重要组成部分<i class="sc">,</i>积雪期间<i class="sc">,</i>皑皑<br>白雪在风力的作用下随物具形<i class="sc">,</i>千姿百态。从初冬冰<br>花乍放的清晰到早春雾凇涓流的婉约<i class="sc">,</i>无时无刻不散<br>发着雪的神韵。夜晚<i class="sc">,</i>洁白如玉的白雪在大红灯笼的<br>照耀下<i class="sc">,</i>宛如天上的朵朵白云飘落人间<i class="sc">,</i>幻化无穷。<br>白雪<i class="sc">,</i>红日<i class="sc">,</i>雪松<i class="sc">,</i>祥云完美的结合在一起构成了雪<br>乡一幅美丽圣洁的图画。</div>
<span class="c" style="left:780px;top:614px">699.0</span>
<span class="c" style="left:951px;top:614px">雪乡风情</span>
<div class="btn prim" style="left:1123px;top:614px;width:82px">加入条幅</div>
<div class="btn info" style="left:1209px;top:614px;width:110px">移出热销路线</div>
<div class="btn prim" style="left:1323px;top:614px;width:110px">加入新推路线</div>
<div class="btn succ" style="left:1123px;top:658px;width:54px">修改</div>
<div class="btn dang" style="left:1181px;top:658px;width:54px">删除</div>
<!-- row 6 -->
<span class="c" style="left:10px;top:801px">6</span>
<div class="img" style="left:95px;top:801px"><svg width="100" height="100" viewBox="0 0 100 100"><defs><filter id="b6" x="-10%" y="-10%" width="120%" height="120%"><feGaussianBlur stdDeviation="0.7"/></filter><linearGradient id="g6" x1="0" y1="0" x2="1" y2="1"><stop offset="0" stop-color="#6a7a28"/><stop offset="1" stop-color="#7a8a28"/></linearGradient><linearGradient id="r6" x1="0" y1="0" x2="1" y2="1"><stop offset="0" stop-color="#80e0d0"/><stop offset="0.5" stop-color="#60d0e0"/><stop offset="1" stop-color="#78dce0"/></linearGradient></defs>
<rect width="100" height="100" fill="url(#g6)"/>
<g filter="url(#b6)">
<ellipse cx="75" cy="18" rx="28" ry="16" fill="#98a040"/>
<ellipse cx="30" cy="12" rx="22" ry="12" fill="#8a9a3a"/>
<polygon points="0,22 20,28 40,32 50,36 50,46 40,56 34,62 36,72 50,86 64,100 0,100" fill="#223c14"/>
<polygon points="56,52 70,46 100,50 100,88 80,84 60,74 53,60" fill="#3e5a1a"/>
<polygon points="36,72 60,84 100,95 100,100 0,100 0,80" fill="#2a4416"/>
<ellipse cx="32.4" cy="15.1" rx="1.1" ry="4.5" fill="#9aa040"/>
<ellipse cx="9.4" cy="58.3" rx="1.3" ry="2.3" fill="#3a5a1a"/>
<ellipse cx="41.8" cy="24.1" rx="1.6" ry="4.5" fill="#5a6a30"/>
<ellipse cx="12.4" cy="22.3" rx="1.9" ry="2.2" fill="#9aa040"/>
<ellipse cx="58.6" cy="5.0" rx="1.1" ry="4.6" fill="#a0a848"/>
<ellipse cx="29.0" cy="14.4" rx="1.9" ry="3.7" fill="#8a9a38"/>
<ellipse cx="68.2" cy="10.3" rx="2.0" ry="3.1" fill="#5a6a30"/>
<ellipse cx="54.8" cy="6.3" rx="1.9" ry="3.5" fill="#8a9a38"/>
<ellipse cx="53.2" cy="77.7" rx="1.9" ry="3.4" fill="#5a7a28"/>
<ellipse cx="30.0" cy="79.4" rx="2.2" ry="2.2" fill="#c8b838"/>
<ellipse cx="30.0" cy="49.5" rx="2.1" ry="2.9" fill="#8a9a28"/>
<ellipse cx="98.0" cy="11.8" rx="1.2" ry="3.0" fill="#b0a850"/>
<ellipse cx="93.3" cy="42.2" rx="1.1" ry="3.7" fill="#c0b040"/>
<ellipse cx="78.9" cy="81.8" rx="2.0" ry="3.8" fill="#b8b040"/>
<ellipse cx="58.0" cy="45.6" rx="2.4" ry="3.4" fill="#3a5a1a"/>
<ellipse cx="66.4" cy="6.1" rx="1.5" ry="3.7" fill="#9aa040"/>
<ellipse cx="68.1" cy="44.6" rx="1.6" ry="4.0" fill="#c0b040"/>
<ellipse cx="2.3" cy="46.2" rx="1.9" ry="3.5" fill="#2a4a18"/>
<ellipse cx="21.8" cy="28.7" rx="1.4" ry="3.2" fill="#9aa040"/>
<ellipse cx="87.1" cy="8.1" rx="1.6" ry="2.8" fill="#b0a850"/>
<ellipse cx="13.7" cy="43.1" rx="1.4" ry="3.2" fill="#3a5a1a"/>
<ellipse cx="35.9" cy="88.4" rx="1.2" ry="2.5" fill="#2a4a18"/>
<ellipse cx="23.2" cy="23.3" rx="2.2" ry="2.5" fill="#b0a850"/>
<ellipse cx="28.2" cy="14.6" rx="1.6" ry="3.7" fill="#5a6a30"/>
<ellipse cx="95.3" cy="69.0" rx="2.4" ry="4.0" fill="#2a4a18"/>
<ellipse cx="74.0" cy="45.7" rx="2.2" ry="3.2" fill="#c0b040"/>
<ellipse cx="39.9" cy="10.4" rx="1.6" ry="2.6" fill="#9aa040"/>
<ellipse cx="98.5" cy="44.1" rx="1.5" ry="2.2" fill="#3a5a1a"/>
<ellipse cx="0.0" cy="15.1" rx="2.4" ry="3.8" fill="#8a9a38"/>
<ellipse cx="7.0" cy="20.8" rx="1.2" ry="2.8" fill="#b0a850"/>
<ellipse cx="34.7" cy="36.4" rx="1.2" ry="3.5" fill="#1e3812"/>
<ellipse cx="97.8" cy="48.0" rx="1.1" ry="2.3" fill="#b8b040"/>
<ellipse cx="34.3" cy="26.5" rx="1.2" ry="2.1" fill="#9aa040"/>
<ellipse cx="95.1" cy="52.8" rx="2.0" ry="4.7" fill="#8a9a30"/>
<ellipse cx="75.8" cy="29.8" rx="2.3" ry="4.1" fill="#9aa040"/>
<ellipse cx="26.1" cy="36.7" rx="1.5" ry="2.7" fill="#2a4a18"/>
<ellipse cx="54.2" cy="50.3" rx="1.3" ry="4.4" fill="#c0b040"/>
<ellipse cx="98.5" cy="85.3" rx="2.2" ry="4.2" fill="#8a9a30"/>
<ellipse cx="22.7" cy="51.8" rx="2.1" ry="5.0" fill="#8a9a28"/>
<ellipse cx="79.0" cy="47.2" rx="2.0" ry="4.9" fill="#8a9a30"/>
<ellipse cx="44.7" cy="93.7" rx="2.4" ry="3.1" fill="#8a9a28"/>
<ellipse cx="22.0" cy="22.7" rx="1.5" ry="3.4" fill="#a0a848"/>
<ellipse cx="98.5" cy="61.0" rx="1.7" ry="4.0" fill="#3a5a1a"/>
<ellipse cx="80.0" cy="8.5" rx="1.2" ry="3.2" fill="#9aa040"/>
<ellipse cx="71.1" cy="19.9" rx="1.7" ry="3.9" fill="#a0a848"/>
<ellipse cx="8.7" cy="94.6" rx="1.6" ry="3.2" fill="#c8b838"/>
<ellipse cx="94.7" cy="72.5" rx="2.5" ry="2.1" fill="#8a9a30"/>
<ellipse cx="59.1" cy="46.5" rx="1.2" ry="4.5" fill="#c0b040"/>
<ellipse cx="98.0" cy="65.7" rx="1.2" ry="3.6" fill="#b8b040"/>
<ellipse cx="2.1" cy="79.9" rx="2.0" ry="3.6" fill="#c8b838"/>
<ellipse cx="93.4" cy="43.4" rx="2.2" ry="2.6" fill="#8a9a30"/>
<ellipse cx="25.2" cy="29.3" rx="2.1" ry="3.0" fill="#a0a848"/>
<ellipse cx="54.4" cy="83.4" rx="2.4" ry="3.1" fill="#3a5a1a"/>
<ellipse cx="45.8" cy="58.3" rx="1.6" ry="4.8" fill="#2a4a18"/>
<ellipse cx="50.2" cy="53.2" rx="1.8" ry="4.6" fill="#2a4a18"/>
<ellipse cx="77.7" cy="60.9" rx="1.3" ry="3.4" fill="#8a9a30"/>
<ellipse cx="72.5" cy="55.6" rx="2.0" ry="3.6" fill="#b8b040"/>
<ellipse cx="48.2" cy="77.6" rx="1.1" ry="2.6" fill="#2a4a18"/>
<ellipse cx="4.2" cy="9.8" rx="1.8" ry="4.3" fill="#b0a850"/>
<ellipse cx="91.2" cy="44.3" rx="2.5" ry="3.8" fill="#2a4a18"/>
<ellipse cx="19.9" cy="27.7" rx="1.8" ry="3.4" fill="#5a6a30"/>
<ellipse cx="94.2" cy="69.9" rx="2.4" ry="4.7" fill="#b8b040"/>
<ellipse cx="20.3" cy="44.8" rx="1.2" ry="3.3" fill="#b0a830"/>
<ellipse cx="7.3" cy="24.1" rx="1.3" ry="2.9" fill="#8a9a38"/>
<ellipse cx="12.2" cy="77.7" rx="2.0" ry="3.1" fill="#c8b838"/>
<ellipse cx="25.3" cy="13.7" rx="1.3" ry="4.9" fill="#b0a850"/>
<ellipse cx="39.8" cy="48.7" rx="2.2" ry="2.5" fill="#c8b838"/>
<ellipse cx="43.2" cy="51.6" rx="1.6" ry="3.1" fill="#8a9a28"/>
<ellipse cx="9.2" cy="36.6" rx="1.8" ry="3.3" fill="#8a9a28"/>
<ellipse cx="1.8" cy="33.1" rx="1.4" ry="4.9" fill="#3a5a1a"/>
<ellipse cx="11.3" cy="91.9" rx="2.5" ry="2.3" fill="#2a4a18"/>
<ellipse cx="26.6" cy="4.0" rx="1.4" ry="2.4" fill="#a0a848"/>
<ellipse cx="42.2" cy="91.1" rx="2.4" ry="3.2" fill="#1a3010"/>
<ellipse cx="53.7" cy="51.5" rx="2.1" ry="2.3" fill="#5a7a28"/>
<ellipse cx="5.8" cy="68.8" rx="2.3" ry="2.8" fill="#b0a830"/>
<ellipse cx="1.7" cy="8.9" rx="1.1" ry="4.6" fill="#6a7a30"/>
<ellipse cx="6.7" cy="86.3" rx="1.0" ry="5.0" fill="#b0a830"/>
<ellipse cx="41.8" cy="91.5" rx="1.2" ry="3.6" fill="#3a5a1a"/>
<ellipse cx="23.8" cy="10.9" rx="1.4" ry="2.5" fill="#a0a848"/>
<ellipse cx="93.2" cy="62.9" rx="2.1" ry="2.9" fill="#2a4a18"/>
<ellipse cx="50.0" cy="17.8" rx="2.2" ry="5.0" fill="#6a7a30"/>
<ellipse cx="3.7" cy="1.8" rx="1.8" ry="2.6" fill="#5a6a30"/>
<ellipse cx="47.5" cy="93.5" rx="2.0" ry="4.0" fill="#3a5a1a"/>
<ellipse cx="65.7" cy="54.6" rx="2.5" ry="2.9" fill="#5a7a28"/>
<ellipse cx="21.5" cy="23.0" rx="2.2" ry="4.1" fill="#a0a848"/>
<ellipse cx="63.6" cy="40.5" rx="2.5" ry="4.5" fill="#b8b040"/>
<ellipse cx="1.4" cy="62.5" rx="1.6" ry="2.2" fill="#8a9a28"/>
<ellipse cx="66.5" cy="38.1" rx="2.0" ry="2.8" fill="#2a4a18"/>
<ellipse cx="24.2" cy="29.3" rx="1.3" ry="2.8" fill="#b0a850"/>
<ellipse cx="0.4" cy="36.4" rx="2.5" ry="3.6" fill="#8a9a28"/>
<ellipse cx="24.4" cy="96.6" rx="1.3" ry="2.5" fill="#8a9a28"/>
<ellipse cx="33.5" cy="8.4" rx="1.8" ry="2.6" fill="#6a7a30"/>
<ellipse cx="50.5" cy="0.5" rx="2.2" ry="2.4" fill="#6a7a30"/>
<ellipse cx="58.7" cy="39.4" rx="1.5" ry="2.7" fill="#b8b040"/>
<ellipse cx="58.6" cy="52.9" rx="2.0" ry="4.1" fill="#8a9a30"/>
<ellipse cx="87.9" cy="39.0" rx="2.1" ry="3.5" fill="#b8b040"/>
<ellipse cx="28.4" cy="61.9" rx="1.1" ry="4.5" fill="#2a4a18"/>
<ellipse cx="89.2" cy="62.7" rx="2.1" ry="3.5" fill="#c0b040"/>
<ellipse cx="91.0" cy="75.3" rx="2.3" ry="4.4" fill="#2a4a18"/>
<ellipse cx="82.6" cy="58.4" rx="2.0" ry="4.1" fill="#c0b040"/>
<ellipse cx="23.0" cy="3.1" rx="2.0" ry="4.9" fill="#a0a848"/>
<ellipse cx="37.7" cy="45.1" rx="1.9" ry="3.9" fill="#1e3812"/>
<ellipse cx="68.1" cy="48.9" rx="1.7" ry="2.2" fill="#3a5a1a"/>
<ellipse cx="93.3" cy="89.8" rx="2.0" ry="2.2" fill="#3a5a1a"/>
<ellipse cx="73.7" cy="25.2" rx="2.3" ry="2.7" fill="#8a9a38"/>
<ellipse cx="75.6" cy="23.1" rx="2.5" ry="3.5" fill="#9aa040"/>
<ellipse cx="38.3" cy="47.9" rx="1.4" ry="2.1" fill="#c8b838"/>
<ellipse cx="63.3" cy="19.8" rx="1.2" ry="2.8" fill="#5a6a30"/>
<ellipse cx="74.3" cy="30.4" rx="1.2" ry="3.4" fill="#2a4a18"/>
<ellipse cx="48.6" cy="97.3" rx="2.0" ry="4.0" fill="#3a5a1a"/>
<ellipse cx="29.1" cy="51.7" rx="1.7" ry="4.3" fill="#b0a830"/>
<ellipse cx="99.3" cy="54.9" rx="2.5" ry="4.8" fill="#b8b040"/>
<ellipse cx="1.8" cy="45.9" rx="1.8" ry="5.0" fill="#1a3010"/>
<ellipse cx="99.4" cy="38.7" rx="1.1" ry="2.3" fill="#8a9a30"/>
<ellipse cx="74.7" cy="26.2" rx="1.2" ry="4.5" fill="#6a7a30"/>
<ellipse cx="50.9" cy="88.7" rx="1.5" ry="3.5" fill="#c0b040"/>
<ellipse cx="87.6" cy="39.4" rx="1.0" ry="3.5" fill="#8a9a30"/>
<ellipse cx="45.1" cy="30.2" rx="1.6" ry="3.1" fill="#8a9a30"/>
<ellipse cx="12.1" cy="33.1" rx="2.1" ry="4.5" fill="#8a9a28"/>
<ellipse cx="12.0" cy="92.6" rx="1.0" ry="4.2" fill="#c8b838"/>
<ellipse cx="25.3" cy="6.5" rx="2.5" ry="3.8" fill="#b0a850"/>
<ellipse cx="36.1" cy="42.8" rx="2.3" ry="2.8" fill="#8a9a28"/>
<ellipse cx="5.2" cy="66.2" rx="2.4" ry="2.7" fill="#c8b838"/>
<ellipse cx="26.6" cy="51.1" rx="2.2" ry="4.4" fill="#2a4a18"/>
<ellipse cx="42.8" cy="2.9" rx="1.6" ry="4.6" fill="#9aa040"/>
<ellipse cx="55.4" cy="20.3" rx="1.1" ry="4.2" fill="#8a9a38"/>
<ellipse cx="45.1" cy="75.3" rx="2.3" ry="3.5" fill="#c0b040"/>
<ellipse cx="91.2" cy="55.0" rx="1.7" ry="3.0" fill="#8a9a30"/>
<ellipse cx="29.8" cy="73.9" rx="1.4" ry="4.0" fill="#c8b838"/>
<ellipse cx="30.1" cy="55.7" rx="1.2" ry="3.9" fill="#b0a830"/>
<ellipse cx="7.5" cy="50.1" rx="1.7" ry="2.7" fill="#1a3010"/>
<ellipse cx="90.6" cy="99.6" rx="1.6" ry="3.6" fill="#5a7a28"/>
<ellipse cx="24.4" cy="17.5" rx="1.1" ry="2.7" fill="#5a6a30"/>
<ellipse cx="25.8" cy="57.0" rx="2.1" ry="3.2" fill="#1e3812"/>
<ellipse cx="41.4" cy="52.4" rx="1.4" ry="4.3" fill="#b0a830"/>
<ellipse cx="49.8" cy="57.4" rx="1.2" ry="3.5" fill="#b8b040"/>
<ellipse cx="63.0" cy="86.3" rx="1.1" ry="4.7" fill="#8a9a30"/>
<ellipse cx="38.5" cy="64.6" rx="2.4" ry="4.5" fill="#b0a830"/>
<ellipse cx="87.3" cy="2.2" rx="1.6" ry="4.3" fill="#8a9a38"/>
<ellipse cx="80.4" cy="96.8" rx="1.0" ry="3.2" fill="#5a7a28"/>
<ellipse cx="92.7" cy="82.6" rx="2.5" ry="2.7" fill="#5a7a28"/>
<ellipse cx="10.9" cy="15.4" rx="2.5" ry="2.3" fill="#5a6a30"/>
<ellipse cx="82.5" cy="70.1" rx="1.1" ry="4.3" fill="#5a7a28"/>
<ellipse cx="0.1" cy="12.6" rx="2.4" ry="3.9" fill="#5a6a30"/>
<ellipse cx="30.4" cy="12.8" rx="1.8" ry="3.3" fill="#6a7a30"/>
<ellipse cx="76.4" cy="9.9" rx="1.8" ry="3.7" fill="#6a7a30"/>
<ellipse cx="38.8" cy="22.4" rx="1.0" ry="3.6" fill="#5a6a30"/>
<ellipse cx="99.6" cy="27.9" rx="2.0" ry="4.7" fill="#6a7a30"/>
<ellipse cx="47.5" cy="23.5" rx="1.0" ry="3.2" fill="#a0a848"/>
<ellipse cx="65.0" cy="5.5" rx="1.7" ry="4.0" fill="#a0a848"/>
<ellipse cx="42.0" cy="25.7" rx="1.6" ry="3.1" fill="#9aa040"/>
<ellipse cx="49.3" cy="69.6" rx="1.6" ry="4.0" fill="#c0b040"/>
<ellipse cx="19.8" cy="79.7" rx="2.3" ry="2.2" fill="#c8b838"/>
<ellipse cx="49.6" cy="20.0" rx="1.3" ry="2.7" fill="#a0a848"/>
<ellipse cx="76.0" cy="29.5" rx="1.7" ry="2.6" fill="#5a6a30"/>
<ellipse cx="22.3" cy="41.7" rx="1.1" ry="3.8" fill="#c8b838"/>
<ellipse cx="92.2" cy="5.4" rx="2.5" ry="2.4" fill="#8a9a38"/>
<ellipse cx="5.2" cy="6.0" rx="1.7" ry="4.1" fill="#b0a850"/>
<ellipse cx="31.4" cy="11.3" rx="2.4" ry="3.0" fill="#8a9a38"/>
<ellipse cx="18.6" cy="93.6" rx="1.7" ry="2.9" fill="#c8b838"/>
<ellipse cx="72.5" cy="83.9" rx="1.7" ry="2.3" fill="#b8b040"/>
<ellipse cx="7.8" cy="8.1" rx="2.4" ry="2.4" fill="#b0a850"/>
<ellipse cx="96.4" cy="20.7" rx="2.2" ry="2.9" fill="#6a7a30"/>
<ellipse cx="80.4" cy="8.8" rx="1.7" ry="3.1" fill="#9aa040"/>
<ellipse cx="92.0" cy="19.3" rx="2.1" ry="3.4" fill="#6a7a30"/>
<ellipse cx="63.2" cy="24.8" rx="2.2" ry="2.1" fill="#9aa040"/>
<ellipse cx="3.5" cy="6.3" rx="1.4" ry="4.2" fill="#8a9a38"/>
<ellipse cx="89.9" cy="33.9" rx="1.5" ry="4.9" fill="#b8b040"/>
<ellipse cx="4.4" cy="74.6" rx="1.5" ry="2.8" fill="#c8b838"/>
<ellipse cx="0.4" cy="75.6" rx="2.0" ry="4.8" fill="#1a3010"/>
<ellipse cx="2.4" cy="23.4" rx="2.1" ry="3.4" fill="#b0a850"/>
<ellipse cx="77.6" cy="79.0" rx="2.2" ry="2.4" fill="#5a7a28"/>
<ellipse cx="49.7" cy="0.9" rx="1.5" ry="4.1" fill="#9aa040"/>
<ellipse cx="15.1" cy="23.6" rx="1.7" ry="4.4" fill="#6a7a30"/>
<ellipse cx="59.6" cy="51.2" rx="2.1" ry="2.7" fill="#5a7a28"/>
<ellipse cx="6.5" cy="3.4" rx="1.8" ry="2.5" fill="#5a6a30"/>
<ellipse cx="42.7" cy="10.5" rx="1.4" ry="2.3" fill="#8a9a38"/>
<ellipse cx="9.6" cy="49.8" rx="2.5" ry="2.5" fill="#c8b838"/>
<ellipse cx="13.3" cy="46.1" rx="1.4" ry="3.6" fill="#c8b838"/>
<ellipse cx="77.4" cy="76.0" rx="1.4" ry="3.7" fill="#b8b040"/>
<ellipse cx="37.3" cy="73.8" rx="1.7" ry="2.6" fill="#2a4a18"/>
<ellipse cx="23.6" cy="28.1" rx="1.3" ry="2.2" fill="#5a6a30"/>
<ellipse cx="25.2" cy="24.6" rx="1.3" ry="4.4" fill="#5a6a30"/>
<ellipse cx="65.3" cy="99.1" rx="1.0" ry="4.6" fill="#3a5a1a"/>
<ellipse cx="23.1" cy="44.8" rx="1.1" ry="2.9" fill="#8a9a28"/>
<ellipse cx="11.9" cy="19.0" rx="1.3" ry="2.2" fill="#5a6a30"/>
<ellipse cx="51.3" cy="17.8" rx="1.4" ry="4.3" fill="#5a6a30"/>
<ellipse cx="94.6" cy="10.6" rx="2.1" ry="3.0" fill="#5a6a30"/>
<ellipse cx="3.7" cy="34.0" rx="1.3" ry="2.8" fill="#1e3812"/>
<ellipse cx="59.9" cy="65.2" rx="2.2" ry="4.5" fill="#8a9a30"/>
<ellipse cx="40.9" cy="37.2" rx="1.5" ry="2.6" fill="#3a5a1a"/>
<ellipse cx="79.5" cy="54.8" rx="1.6" ry="4.4" fill="#3a5a1a"/>
<ellipse cx="66.4" cy="15.5" rx="1.1" ry="2.5" fill="#5a6a30"/>
<ellipse cx="69.5" cy="41.0" rx="2.0" ry="3.3" fill="#b8b040"/>
<ellipse cx="5.1" cy="74.5" rx="1.6" ry="2.1" fill="#8a9a28"/>
<ellipse cx="76.7" cy="80.2" rx="1.3" ry="4.2" fill="#c0b040"/>
<ellipse cx="20.4" cy="0.6" rx="1.6" ry="4.5" fill="#a0a848"/>
<ellipse cx="40.6" cy="88.3" rx="2.2" ry="2.4" fill="#b0a830"/>
<ellipse cx="5.2" cy="14.2" rx="1.1" ry="3.9" fill="#b0a850"/>
<ellipse cx="37.1" cy="50.4" rx="1.5" ry="2.5" fill="#2a4a18"/>
<ellipse cx="17.2" cy="6.7" rx="1.7" ry="4.4" fill="#b0a850"/>
<ellipse cx="96.7" cy="19.7" rx="2.3" ry="2.1" fill="#a0a848"/>
<ellipse cx="91.3" cy="31.5" rx="2.4" ry="3.2" fill="#2a4a18"/>
<ellipse cx="90.4" cy="62.0" rx="2.0" ry="4.6" fill="#8a9a30"/>
<ellipse cx="62.1" cy="61.5" rx="2.2" ry="2.5" fill="#8a9a30"/>
<ellipse cx="21.8" cy="40.0" rx="1.2" ry="3.1" fill="#3a5a1a"/>
<ellipse cx="14.9" cy="97.1" rx="2.3" ry="2.1" fill="#1a3010"/>
<ellipse cx="56.2" cy="75.7" rx="2.0" ry="3.0" fill="#3a5a1a"/>
<ellipse cx="39.0" cy="45.6" rx="1.9" ry="2.9" fill="#1a3010"/>
<ellipse cx="42.0" cy="58.3" rx="1.6" ry="3.1" fill="#b0a830"/>
<ellipse cx="50.4" cy="17.9" rx="1.9" ry="3.5" fill="#8a9a38"/>
<ellipse cx="23.5" cy="76.4" rx="2.2" ry="4.5" fill="#1a3010"/>
<ellipse cx="81.1" cy="40.0" rx="1.2" ry="3.3" fill="#3a5a1a"/>
<ellipse cx="9.2" cy="44.2" rx="2.0" ry="2.1" fill="#3a5a1a"/>
<ellipse cx="13.0" cy="92.2" rx="2.2" ry="3.5" fill="#8a9a28"/>
<ellipse cx="5.4" cy="50.4" rx="2.0" ry="4.4" fill="#b0a830"/>
<ellipse cx="2.6" cy="6.6" rx="2.1" ry="4.4" fill="#5a6a30"/>
<ellipse cx="19.4" cy="98.2" rx="1.4" ry="4.4" fill="#b0a830"/>
<ellipse cx="79.5" cy="68.6" rx="2.4" ry="2.2" fill="#c0b040"/>
<ellipse cx="35.1" cy="75.6" rx="1.5" ry="3.8" fill="#2a4a18"/>
<rect x="1" y="8" width="5" height="14" fill="#4a5a50"/>
<rect x="16" y="0" width="2" height="20" fill="#4a5a40"/>
<path d="M48,34 C60,35 65,42 61,48 C56,53 47,56 40,60 C34,64 35,71 39,76 C45,82 60,85 74,89 C86,92 96,96 100,99 L100,89 C92,86 82,83 72,80 C62,76 55,72 53,66 C52,60 58,56 63,52 C69,44 66,37 53,33 Z" fill="url(#r6)"/>
<path d="M53,66 C55,72 62,76 72,80 C82,83 92,86 100,89 L100,86 C90,83 80,80 72,77 C62,73 57,70 55,64 Z" fill="#8a9a6a" opacity="0.8"/>
</g></svg></div>
<span class="c link" style="left:266px;top:801px">新疆喀纳斯3日游</span>
<div class="c" style="left:437px;top:801px">喀纳斯湖(Kanas Lake):国家AAAAA级旅游景区、国<br>家地质公园、国家森林公园、中国自然保护区、国家<br>自然遗产、全国低碳旅游实验区、中国最美湖泊<i class="sc">,</i>喀<br>纳斯湖雪峰耸峙绿坡墨林<i class="sc">,</i>湖光山色美不胜收<i class="sc">,</i>被誉<br>为"人间仙境、神的花园"。景区内各景点门票</div>
<span class="c" style="left:780px;top:801px">899.0</span>
<span class="c" style="left:951px;top:801px">名山大川</span>
<div class="btn info" style="left:1123px;top:801px;width:82px">移出条幅</div>
<div class="btn prim" style="left:1209px;top:801px;width:110px">加入热销路线</div>
<div class="btn info" style="left:1323px;top:801px;width:110px">移出新推路线</div>
<div class="btn succ" style="left:1123px;top:845px;width:54px">修改</div>
<div class="btn dang" style="left:1181px;top:845px;width:54px">删除</div>

<!-- pagination -->
<div class="btn dis" style="left:549px;top:961px;width:54px">首页</div>
<div class="btn dis" style="left:607px;top:961px;width:68px">上一页</div>
<span class="c" style="left:679px;top:957px;font-size:24px;line-height:34px">[<i class="one"><svg width="13.35" height="34"><rect x="6.4" y="8" width="2" height="16.9" fill="#333"/><polygon points="6.6,8 8.4,8 8.4,9.8 2.2,13.6 2.2,11.9" fill="#333"/></svg></i>/<i class="one"><svg width="13.35" height="34"><rect x="6.4" y="8" width="2" height="16.9" fill="#333"/><polygon points="6.6,8 8.4,8 8.4,9.8 2.2,13.6 2.2,11.9" fill="#333"/></svg></i>]</span><span class="c" style="left:729px;top:957px;font-size:24px;line-height:34px;letter-spacing:0px">[5]</span>
<div class="btn dis" style="left:760px;top:961px;width:68px">下一页</div>
<div class="btn dis" style="left:832px;top:961px;width:54px">尾页</div>
<div class="abs" style="left:889px;top:960px;width:60px;height:34px;border:1px solid #ccc;border-radius:4px;background:#fff"></div>
<div class="btn info" style="left:949px;top:961px;width:48px">GO</div>
</body></html>
